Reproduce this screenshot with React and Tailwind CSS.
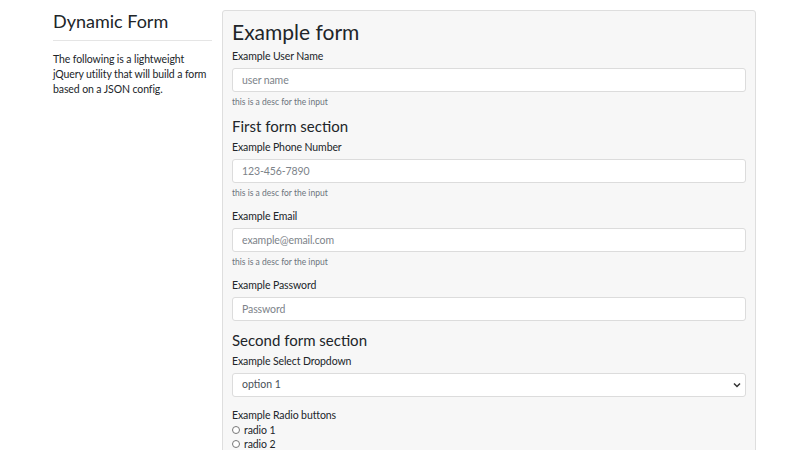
import React from "react";

const Desc = () => (
  <div className="text-[8.5px] leading-[10px] text-[#6c757d] mt-[5px]">this is a desc for the input</div>
);

const Field = ({ label, placeholder, desc }) => (
  <div className="mb-[11px]">
    <label className="block text-[10.5px] tracking-[-0.1px] leading-[14px] mb-[5px]">{label}</label>
    <input
      className="block w-full h-[24px] bg-white border border-[#dcdcdc] rounded-[3px] px-[9px] text-[10.5px] tracking-[-0.1px] placeholder:text-[#7d838a] outline-none"
      placeholder={placeholder}
    />
    {desc && <Desc />}
  </div>
);

const SectionTitle = ({ children }) => (
  <h3 className="text-[15px] leading-[20px] -mt-[2px] mb-[4px]">{children}</h3>
);

export default function App() {
  return (
    <div
      className="w-[800px] h-[450px] overflow-hidden bg-white text-[#212529] flex gap-[10px] pl-[53px] pt-[10px]"
      style={{ fontFamily: "Lato, 'Open Sans', sans-serif" }}
    >
      <div className="w-[159px] shrink-0">
        <h2 className="text-[18px] leading-[24px] font-normal -mt-[1px]">Dynamic Form</h2>
        <hr className="border-[#e5e5e5] mt-[7px] mb-[11px]" />
        <p className="text-[10.5px] tracking-[-0.1px] leading-[15px]">
          The following is a lightweight jQuery utility that will build a form based on a JSON config.
        </p>
      </div>
      <div className="w-[534px] h-[460px] bg-[#f7f7f7] border border-[#dedede] rounded-[3px] px-[9px] pt-[6px]">
        <h1 className="text-[21px] leading-[30px] mb-[2px]">Example form</h1>
        <Field label="Example User Name" placeholder="user name" desc />
        <SectionTitle>First form section</SectionTitle>
        <Field label="Example Phone Number" placeholder="123-456-7890" desc />
        <Field label="Example Email" placeholder="example@email.com" desc />
        <Field label="Example Password" placeholder="Password" />
        <SectionTitle>Second form section</SectionTitle>
        <div className="mb-[11px]">
          <label className="block text-[10.5px] tracking-[-0.1px] leading-[14px] mb-[5px]">Example Select Dropdown</label>
          <div className="flex items-center justify-between w-full h-[24px] bg-white border border-[#dcdcdc] rounded-[3px] pl-[9px] pr-[4px] text-[10.5px] text-[#495057]">
            <span>option 1</span>
            <svg width="8" height="6" viewBox="0 0 8 6">
              <path d="M1 1.5 L4 4.5 L7 1.5" stroke="#333" strokeWidth="1.5" fill="none" />
            </svg>
          </div>
        </div>
        <div className="text-[10.5px] tracking-[-0.1px] leading-[14px]">
          <div className="mb-[1px]">Example Radio buttons</div>
          {["radio 1", "radio 2"].map((r) => (
            <div key={r} className="flex items-center gap-[4px] leading-[14px]">
              <span className="w-[8px] h-[8px] rounded-full border border-[#777] bg-white" />
              <span>{r}</span>
            </div>
          ))}
        </div>
      </div>
    </div>
  );
}
